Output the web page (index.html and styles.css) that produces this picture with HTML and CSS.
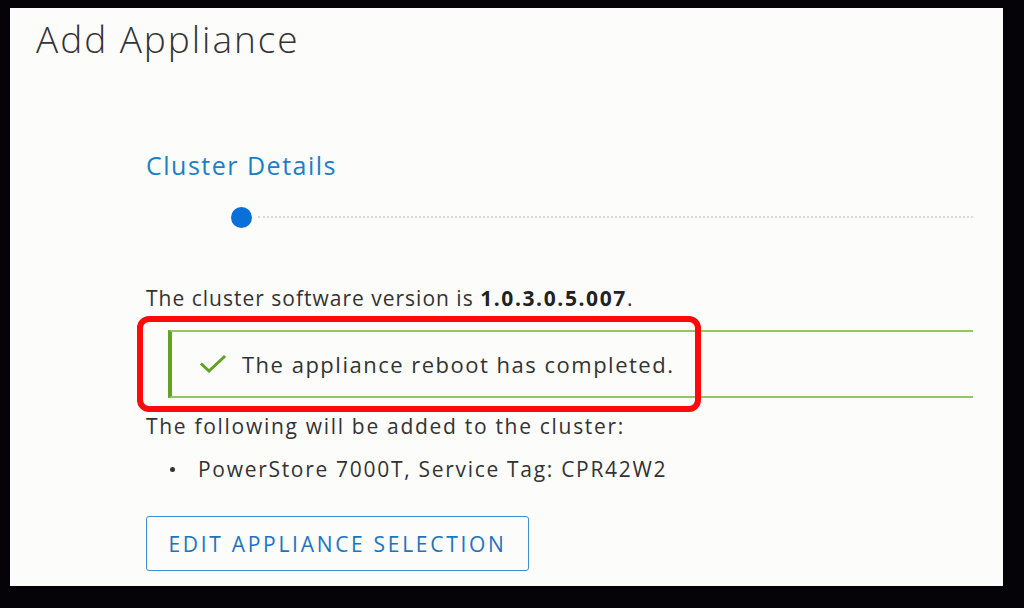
FILE: index.html
```html
<!DOCTYPE html>
<html>
<head>
<meta charset="utf-8">
<link rel="stylesheet" href="styles.css">
</head>
<body>
<div class="panel">
  <h1 class="title">Add Appliance</h1>
  <div class="content">
    <h2 class="step-title">Cluster Details</h2>
    <div class="stepper">
      <span class="dot"></span>
      <span class="track"></span>
    </div>
    <p class="version">The cluster software version is <b>1.0.3.0.5.007</b>.</p>
    <div class="alert-wrap">
      <div class="alert">
        <svg class="check" width="28" height="20" viewBox="0 0 28 20"><path d="M3 10.5 L10 17 L25 3" fill="none" stroke="#5fa31f" stroke-width="3" stroke-linecap="square"/></svg>
        <span class="alert-text">The appliance reboot has completed.</span>
      </div>
      <div class="highlight"></div>
    </div>
    <p class="following">The following will be added to the cluster:</p>
    <ul class="list">
      <li>PowerStore 7000T, Service Tag: CPR42W2</li>
    </ul>
    <button class="btn">EDIT APPLIANCE SELECTION</button>
  </div>
</div>
</body>
</html>
```
FILE: styles.css
```css
html, body {
  margin: 0;
  padding: 0;
  background: #050307;
}
body {
  width: 1024px;
  height: 608px;
  overflow: hidden;
  font-family: "Open Sans", "Lato", sans-serif;
  color: #333;
}
.panel {
  box-sizing: border-box;
  margin: 8px 0 0 10px;
  width: 993px;
  height: 578px;
  background: #fcfcfa;
  padding: 9px 30px 0 26px;
}
.title {
  margin: 0;
  font-weight: 300;
  font-size: 37px;
  line-height: 44px;
  color: #333;
  letter-spacing: 1.95px;
}
.content {
  padding: 89px 0 0 110px;
}
.step-title {
  margin: 0;
  font-weight: 400;
  font-size: 25px;
  line-height: 30px;
  color: #1b7fc8;
  letter-spacing: 1.5px;
}
.stepper {
  display: flex;
  align-items: center;
  margin-top: 26px;
  padding-left: 85px;
  height: 22px;
}
.dot {
  width: 21px;
  height: 21px;
  border-radius: 50%;
  background: #0a6fd8;
  flex: none;
}
.track {
  flex: 1;
  margin-left: 6px;
  border-top: 2px dotted #d8d8d8;
}
.version {
  margin: 58px 0 0 0;
  font-size: 21px;
  line-height: 24px;
  letter-spacing: 1px;
  color: #333;
}
.version b {
  font-weight: 700;
  color: #222;
  letter-spacing: 1.6px;
}
.alert-wrap {
  position: relative;
  margin-top: 20px;
}
.alert {
  box-sizing: border-box;
  margin-left: 22px;
  height: 68px;
  display: flex;
  align-items: center;
  border-top: 2px solid #94c763;
  border-bottom: 2px solid #94c763;
  border-left: 4px solid #62a420;
  padding-left: 27px;
}
.check {
  flex: none;
}
.alert-text {
  margin-left: 15px;
  font-size: 22px;
  line-height: 24px;
  letter-spacing: 1.5px;
  color: #333;
}
.highlight {
  position: absolute;
  box-sizing: border-box;
  left: -9px;
  top: -14px;
  width: 564px;
  height: 96px;
  border: 6px solid #ff0a0a;
  border-radius: 12px;
}
.following {
  margin: 16px 0 0 0;
  font-size: 21px;
  line-height: 24px;
  letter-spacing: 1.7px;
}
.list {
  list-style: none;
  margin: 19px 0 0 0;
  padding-left: 24px;
  font-size: 21px;
  line-height: 24px;
  letter-spacing: 1.7px;
}
.list li {
  display: flex;
  align-items: center;
}
.list li::before {
  content: "";
  width: 5px;
  height: 5px;
  border-radius: 50%;
  background: #333;
  margin-right: 23px;
  flex: none;
}
.btn {
  display: block;
  margin-top: 35px;
  width: 383px;
  height: 55px;
  background: transparent;
  border: 1.5px solid #3f8fd6;
  border-radius: 3px;
  color: #1a74c4;
  font-family: "Open Sans", sans-serif;
  font-size: 21px;
  letter-spacing: 2.7px;
  padding: 0;
}
```
